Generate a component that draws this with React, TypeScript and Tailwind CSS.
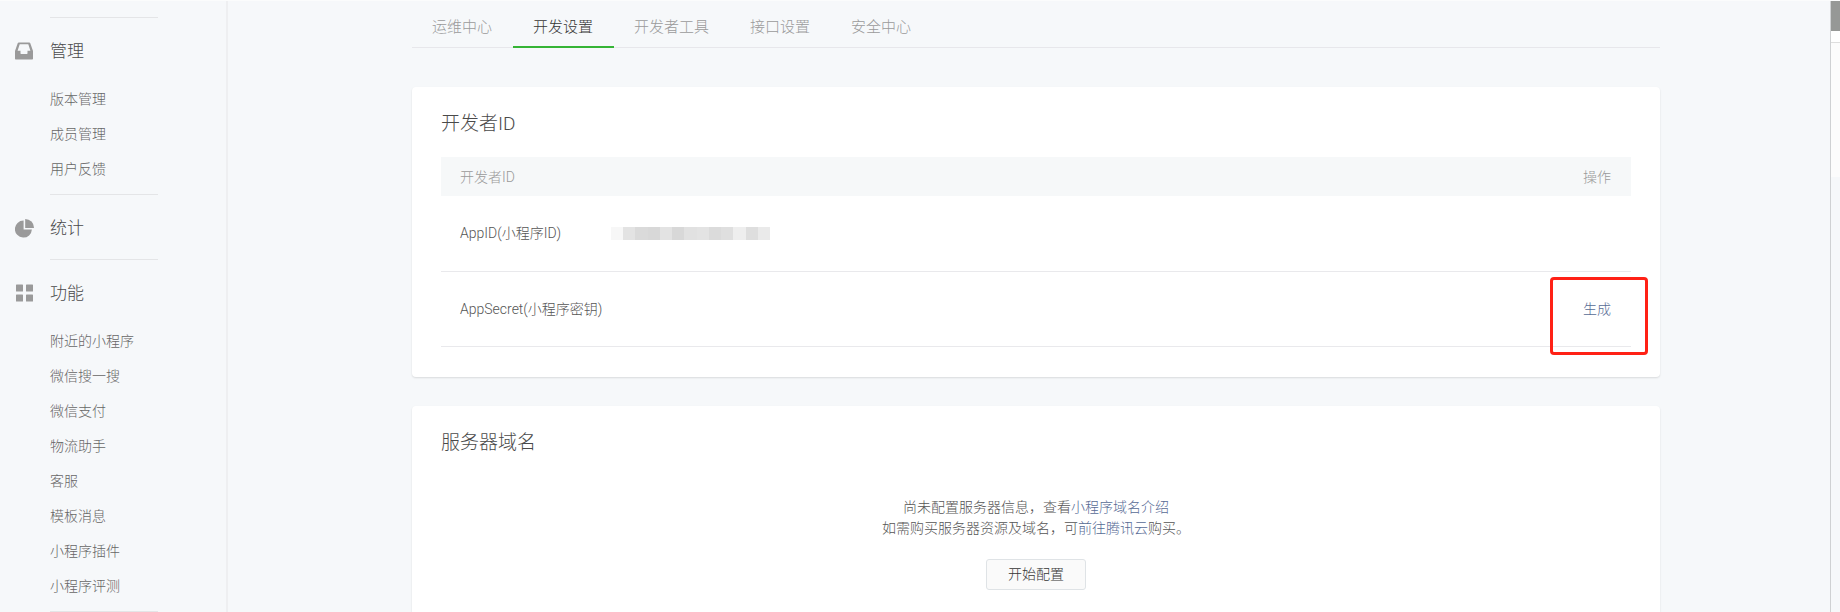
import React from 'react';

interface MenuGroup {
  title: string;
  icon: React.ReactNode;
  items: string[];
}

const InboxIcon = () => (
  <svg width="18" height="18" viewBox="0 0 18 18" fill="#9a9a9a" aria-hidden="true">
    <path
      fillRule="evenodd"
      d="M3.8 0.5h10.4c.5 0 .9.2 1.1.7L18 9v7.5c0 .6-.4 1-1 1H1c-.6 0-1-.4-1-1V9L2.7 1.2c.2-.5.6-.7 1.1-.7zM4.7 2.3 2.6 8.8h2.9v2.1c0 .8.4 1.2 1.2 1.2h4.6c.8 0 1.2-.4 1.2-1.2V8.8h2.9l-2.1-6.5z"
    />
  </svg>
);

const PieIcon = () => (
  <svg width="19" height="19" viewBox="0 0 19 19" fill="#9a9a9a" aria-hidden="true">
    <path d="M8.6 1.6v9h8.3A8.5 8.5 0 1 1 8.6 1.6z" />
    <path d="M10.2 0a8.8 8.8 0 0 1 8.8 8.9h-8.8z" />
  </svg>
);

const GridIcon = () => (
  <svg width="18" height="18" viewBox="0 0 18 18" fill="#9a9a9a" aria-hidden="true">
    <rect x="1" y="0.5" width="7" height="7" rx="0.6" />
    <rect x="11" y="0.5" width="7" height="7" rx="0.6" />
    <rect x="1" y="10.5" width="7" height="7" rx="0.6" />
    <rect x="11" y="10.5" width="7" height="7" rx="0.6" />
  </svg>
);

const menu: MenuGroup[] = [
  { title: '管理', icon: <InboxIcon />, items: ['版本管理', '成员管理', '用户反馈'] },
  { title: '统计', icon: <PieIcon />, items: [] },
  {
    title: '功能',
    icon: <GridIcon />,
    items: [
      '附近的小程序',
      '微信搜一搜',
      '微信支付',
      '物流助手',
      '客服',
      '模板消息',
      '小程序插件',
      '小程序评测',
    ],
  },
];

const tabs = ['运维中心', '开发设置', '开发者工具', '接口设置', '安全中心'];

// AppID is masked with grey blocks
const maskColors = [
  '#f7f7f7', '#e3e3e3', '#dadada', '#d8d8d8', '#e3e3e3', '#d8d8d8', '#e1e1e1',
  '#e3e3e3', '#dbdbdb', '#dfdfdf', '#eeeeee', '#dedede', '#eaeaea',
];

function Sidebar() {
  return (
    <aside className="w-[228px] shrink-0 border-r-2 border-[#eeeff1] pt-4">
      {menu.map((group) => (
        <section key={group.title}>
          <div className="ml-[50px] w-[108px] border-t border-[#e4e5e7]" />
          <h2 className="mt-[17px] mb-[13px] flex h-[34px] items-center text-[17px] font-light text-[#4a4a4a]">
            <span className="flex w-[50px] pb-0.5 pl-[15px]">{group.icon}</span>
            {group.title}
          </h2>
          {group.items.length > 0 && (
            <ul className="pb-[7px] pl-[50px]">
              {group.items.map((item) => (
                <li key={item} className="h-[35px] text-sm leading-[35px]">
                  <a href="#" className="text-[#666666]">{item}</a>
                </li>
              ))}
            </ul>
          )}
        </section>
      ))}
      <div className="ml-[50px] w-[108px] border-t border-[#e4e5e7]" />
    </aside>
  );
}

function Tabs() {
  return (
    <nav className="flex border-b border-[#e7e7eb] pt-[7px]">
      {tabs.map((tab) => (
        <a
          key={tab}
          href="#"
          className={
            tab === '开发设置'
              ? '-mb-px h-10 border-b-2 border-[#35b435] pr-[21px] pl-5 text-[15px] leading-[38px] text-[#353535]'
              : '-mb-px h-10 pr-[21px] pl-5 text-[15px] leading-[38px] text-[#9a9a9a]'
          }
        >
          {tab}
        </a>
      ))}
    </nav>
  );
}

function DeveloperId() {
  return (
    <section className="mt-[39px] rounded bg-white px-[29px] pt-[22px] pb-[30px] shadow-[0_1px_2px_rgba(0,0,0,0.12)]">
      <h3 className="text-[19px] leading-[30px] text-[#4a4a4a]">开发者ID</h3>
      <table className="mt-[18px] w-full text-sm">
        <thead>
          <tr className="h-[39px] bg-[#f6f8f9] text-[#9a9a9a]">
            <th colSpan={2} className="px-[19px] text-left font-light">开发者ID</th>
            <th className="px-5 text-right font-light">操作</th>
          </tr>
        </thead>
        <tbody className="text-[#555555]">
          <tr className="h-[75px] border-b border-[#e9e9ec]">
            <td className="w-[170px] pl-[19px] whitespace-nowrap">AppID(小程序ID)</td>
            <td>
              <div className="flex h-[13px] w-[159px]">
                {maskColors.map((color, i) => (
                  <span key={i} className="flex-1" style={{ backgroundColor: color }} />
                ))}
              </div>
            </td>
            <td />
          </tr>
          <tr className="h-[75px] border-b border-[#e9e9ec]">
            <td className="w-[170px] pl-[19px] whitespace-nowrap">AppSecret(小程序密钥)</td>
            <td />
            <td className="relative px-5 text-right">
              <a href="#" className="text-[#576b95]">生成</a>
              <div className="pointer-events-none absolute top-[5px] -right-[17px] h-[78px] w-[98px] rounded border-3 border-[#ff2116]" />
            </td>
          </tr>
        </tbody>
      </table>
    </section>
  );
}

function ServerDomain() {
  return (
    <section className="mt-[29px] flex-1 rounded-t bg-white px-[29px] pt-[22px] pb-4 shadow-[0_1px_2px_rgba(0,0,0,0.12)]">
      <h3 className="text-[19px] leading-[30px] text-[#4a4a4a]">服务器域名</h3>
      <div className="mt-[39px] text-center text-sm leading-[21px] text-[#555555]">
        <p>
          尚未配置服务器信息，查看<a href="#" className="text-[#576b95]">小程序域名介绍</a>
        </p>
        <p>
          如需购买服务器资源及域名，可<a href="#" className="text-[#576b95]">前往腾讯云</a>购买。
        </p>
        <button
          type="button"
          className="mt-5 h-[31px] w-[100px] rounded-[3px] border border-[#dfe3e6] bg-[#fafafa] text-sm font-light text-[#353535]"
        >
          开始配置
        </button>
      </div>
    </section>
  );
}

export default function App() {
  return (
    <div className="flex min-h-screen border-t border-[#fbfcfc] bg-[#f6f8fa] font-[Roboto,'Noto_Sans_CJK_SC',sans-serif] font-light">
      <Sidebar />
      <main className="flex flex-1 flex-col pr-[170px] pl-[184px]">
        <Tabs />
        <DeveloperId />
        <ServerDomain />
      </main>
      <div className="flex w-[10px] shrink-0 flex-col border-l border-[#cfd1d3]">
        <div className="h-[30px] bg-[#969896]" />
        <div className="h-3 border-b border-[#dedede] bg-white" />
        <div className="h-[134px] bg-[#fcfcfc]" />
      </div>
    </div>
  );
}
